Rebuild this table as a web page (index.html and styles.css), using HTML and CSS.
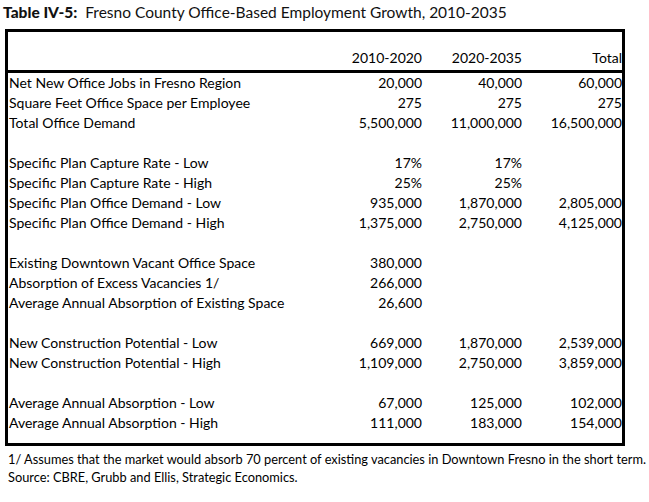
FILE: index.html
```html
<!DOCTYPE html>
<html>
<head>
<meta charset="utf-8">
<link rel="stylesheet" href="styles.css">
</head>
<body>
<div class="title"><span class="title-b">Table IV-5:</span>&nbsp; Fresno County Office-Based Employment Growth, 2010-2035</div>
<div class="box">
  <div class="grid head">
    <div></div><div class="num">2010-2020</div><div class="num">2020-2035</div><div class="num">Total</div>
  </div>
  <div class="body">
    <div class="grid"><div>Net New Office Jobs in Fresno Region</div><div class="num">20,000</div><div class="num">40,000</div><div class="num">60,000</div></div>
    <div class="grid"><div>Square Feet Office Space per Employee</div><div class="num">275</div><div class="num">275</div><div class="num">275</div></div>
    <div class="grid"><div>Total Office Demand</div><div class="num">5,500,000</div><div class="num">11,000,000</div><div class="num">16,500,000</div></div>
    <div class="grid gap"></div>
    <div class="grid"><div>Specific Plan Capture Rate - Low</div><div class="num">17%</div><div class="num">17%</div><div class="num"></div></div>
    <div class="grid"><div>Specific Plan Capture Rate - High</div><div class="num">25%</div><div class="num">25%</div><div class="num"></div></div>
    <div class="grid"><div>Specific Plan Office Demand - Low</div><div class="num">935,000</div><div class="num">1,870,000</div><div class="num">2,805,000</div></div>
    <div class="grid"><div>Specific Plan Office Demand - High</div><div class="num">1,375,000</div><div class="num">2,750,000</div><div class="num">4,125,000</div></div>
    <div class="grid gap"></div>
    <div class="grid"><div>Existing Downtown Vacant Office Space</div><div class="num">380,000</div><div class="num"></div><div class="num"></div></div>
    <div class="grid"><div>Absorption of Excess Vacancies 1/</div><div class="num">266,000</div><div class="num"></div><div class="num"></div></div>
    <div class="grid"><div>Average Annual Absorption of Existing Space</div><div class="num">26,600</div><div class="num"></div><div class="num"></div></div>
    <div class="grid gap"></div>
    <div class="grid"><div>New Construction Potential - Low</div><div class="num">669,000</div><div class="num">1,870,000</div><div class="num">2,539,000</div></div>
    <div class="grid"><div>New Construction Potential - High</div><div class="num">1,109,000</div><div class="num">2,750,000</div><div class="num">3,859,000</div></div>
    <div class="grid gap"></div>
    <div class="grid"><div>Average Annual Absorption - Low</div><div class="num">67,000</div><div class="num">125,000</div><div class="num">102,000</div></div>
    <div class="grid"><div>Average Annual Absorption - High</div><div class="num">111,000</div><div class="num">183,000</div><div class="num">154,000</div></div>
  </div>
</div>
<div class="notes">
  <div>1/ Assumes that the market would absorb 70 percent of existing vacancies in Downtown Fresno in the short term.</div>
  <div>Source: CBRE, Grubb and Ellis, Strategic Economics.</div>
</div>
</body>
</html>
```

FILE: styles.css
```css
html, body {
  margin: 0;
  padding: 0;
  background: #fff;
}
body {
  font-family: "Lato", "Open Sans", sans-serif;
  color: #000;
}
.title {
  font-family: "Lato", sans-serif;
  font-size: 15.5px;
  line-height: 24px;
  padding-left: 3px;
  height: 29px;
  color: #111;
  white-space: nowrap;
}
.title-b {
  font-weight: 900;
}
.box {
  margin-left: 5px;
  width: 614px;
  border: 3px solid #000;
  font-size: 14px;
}
.grid {
  display: grid;
  grid-template-columns: 1fr 100px 100px 100px;
  height: 20px;
  line-height: 20px;
  padding-left: 1px;
}
.head {
  align-items: end;
  padding-bottom: 2px;
  box-sizing: border-box;
  border-bottom: 3px solid #000;
  height: 41px;
}
.body {
  padding-bottom: 10px;
}
.num {
  text-align: right;
}
.notes {
  font-size: 12.8px;
  line-height: 18px;
  padding-left: 8px;
  padding-top: 4px;
  white-space: nowrap;
}
```
